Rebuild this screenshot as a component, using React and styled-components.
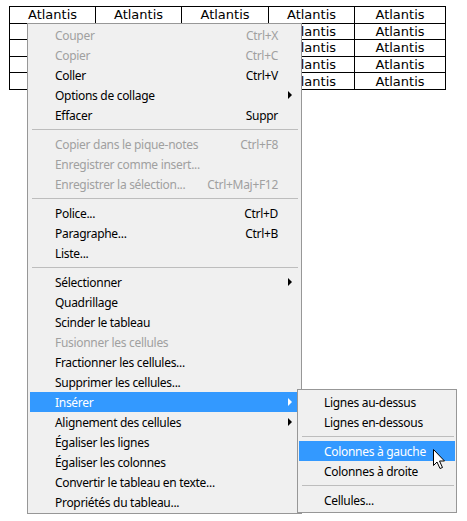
import React from 'react';
import styled, { createGlobalStyle } from 'styled-components';

const GlobalStyle = createGlobalStyle`
  html, body {
    margin: 0;
    padding: 0;
    background: #fff;
  }
  body {
    font-family: 'Noto Sans', 'Open Sans', sans-serif;
  }
`;

const Page = styled.div`
  position: relative;
  width: 467px;
  height: 521px;
  overflow: hidden;
  background: #fff;
`;

const Table = styled.table`
  margin: 6px 0 0 9px;
  border-collapse: collapse;
  font-family: 'DejaVu Sans', Verdana, sans-serif;
  font-size: 13px;
  color: #000;
`;

const Cell = styled.td`
  border: 1px solid #000;
  width: ${(p) => p.$w}px;
  height: 15.6px;
  padding: 0;
  text-align: center;
  line-height: 15px;
`;

const Menu = styled.div`
  position: absolute;
  left: ${(p) => p.$x}px;
  top: ${(p) => p.$y}px;
  width: ${(p) => p.$w}px;
  box-sizing: border-box;
  background: #f0f0f0;
  border: 1px solid #979797;
  padding: ${(p) => p.$pad};
  font-size: 12px;
  letter-spacing: -0.3px;
  color: #000;
`;

const Item = styled.div`
  display: grid;
  grid-template-columns: 1fr auto 21px;
  align-items: center;
  height: 20px;
  padding-left: 25px;
  background: ${(p) => (p.$active ? '#3399ff' : 'transparent')};
  color: ${(p) => (p.$active ? '#fff' : p.$disabled ? '#a0a0a0' : '#000')};
  white-space: nowrap;
`;

const Shortcut = styled.span`
  text-align: right;
`;

const ArrowCell = styled.span`
  display: flex;
  align-items: center;
  padding-left: 10px;
`;

const Arrow = styled.span`
  width: 0;
  height: 0;
  border-top: 4px solid transparent;
  border-bottom: 4px solid transparent;
  border-left: 4px solid ${(p) => (p.$active ? '#fff' : '#000')};
`;

const Separator = styled.div`
  height: 1px;
  margin: 4px 1px 4px ${(p) => p.$indent}px;
  background: #bdbdbd;
`;

const Cursor = styled.svg`
  position: absolute;
  left: 432px;
  top: 448px;
`;

const columns = [85, 85, 86, 85, 90];

const mainItems = [
  { label: 'Couper', key: 'Ctrl+X', disabled: true },
  { label: 'Copier', key: 'Ctrl+C', disabled: true },
  { label: 'Coller', key: 'Ctrl+V' },
  { label: 'Options de collage', sub: true },
  { label: 'Effacer', key: 'Suppr' },
  'sep',
  { label: 'Copier dans le pique-notes', key: 'Ctrl+F8', disabled: true },
  { label: 'Enregistrer comme insert...', disabled: true },
  { label: 'Enregistrer la sélection...', key: 'Ctrl+Maj+F12', disabled: true },
  'sep',
  { label: 'Police...', key: 'Ctrl+D' },
  { label: 'Paragraphe...', key: 'Ctrl+B' },
  { label: 'Liste...' },
  'sep',
  { label: 'Sélectionner', sub: true },
  { label: 'Quadrillage' },
  { label: 'Scinder le tableau' },
  { label: 'Fusionner les cellules', disabled: true },
  { label: 'Fractionner les cellules...' },
  { label: 'Supprimer les cellules...' },
  { label: 'Insérer', sub: true, active: true },
  { label: 'Alignement des cellules', sub: true },
  { label: 'Égaliser les lignes' },
  { label: 'Égaliser les colonnes' },
  { label: 'Convertir le tableau en texte...' },
  { label: 'Propriétés du tableau...' },
];

const subItems = [
  { label: 'Lignes au-dessus' },
  { label: 'Lignes en-dessous' },
  'sep',
  { label: 'Colonnes à gauche', active: true },
  { label: 'Colonnes à droite' },
  'sep',
  { label: 'Cellules...' },
];

const MenuList = ({ items, indent }) =>
  items.map((it, i) =>
    it === 'sep' ? (
      <Separator key={i} $indent={indent} />
    ) : (
      <Item key={i} $active={it.active} $disabled={it.disabled}>
        <span>{it.label}</span>
        <Shortcut>{it.key}</Shortcut>
        <ArrowCell>{it.sub && <Arrow $active={it.active} />}</ArrowCell>
      </Item>
    )
  );

export default function App() {
  return (
    <Page>
      <GlobalStyle />
      <Table>
        <tbody>
          {[0, 1, 2, 3, 4].map((r) => (
            <tr key={r}>
              {columns.map((w, c) => (
                <Cell key={c} $w={w}>
                  Atlantis
                </Cell>
              ))}
            </tr>
          ))}
        </tbody>
      </Table>

      <Menu $x={27} $y={23} $w={275} $pad="1px 2px">
        <MenuList items={mainItems} indent={2} />
      </Menu>

      <Menu $x={297} $y={389} $w={160} $pad="2px 1px">
        <MenuList items={subItems} indent={3} />
      </Menu>

      <Cursor width="14" height="22" viewBox="0 0 14 22">
        <path
          d="M1.5 1.5 L1.5 17.5 L5 14 L8 20.5 L10.5 19.5 L7.5 13 L12.5 13 Z"
          fill="#fff"
          stroke="#000"
          strokeWidth="1"
          strokeLinejoin="miter"
        />
      </Cursor>
    </Page>
  );
}
